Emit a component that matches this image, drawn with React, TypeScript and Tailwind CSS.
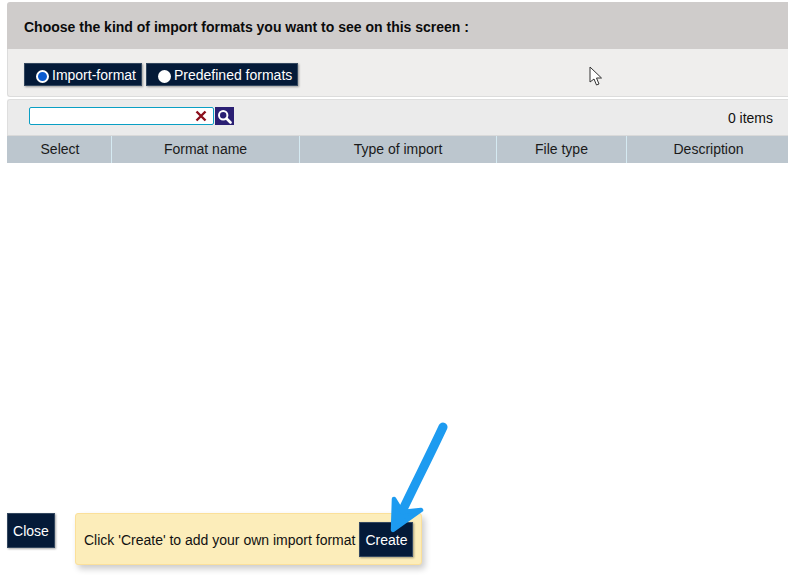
export default function App() {
  const btn = "bg-[#041a38] border border-[#33475f] text-white text-[14px] leading-none shadow-[1px_1px_2px_rgba(0,0,0,0.35)]";
  return (
    <div className="relative w-[788px] h-[579px] overflow-hidden bg-white pl-[7px] pt-[2px] flex flex-col font-['Liberation_Sans',Arial,sans-serif] text-[14px] text-[#111]">
      <div className="h-[47px] bg-[#cfcccb] rounded-tl-[3px] flex items-center pl-[17px] font-bold text-[14px] text-[#0b0b0b]">
        <span className="pt-[4px]">Choose the kind of import formats you want to see on this screen :</span>
      </div>
      <div className="h-[48px] bg-[#efeeed] border-b border-l border-[#dcdcdc] rounded-bl-[3px] flex items-start pl-[16px] pt-[14px] gap-[4px]">
        <div className={`${btn} w-[118px] h-[23px] flex items-center pl-[11px] gap-[3px]`}>
          <span className="w-[13px] h-[13px] mt-[3px] rounded-full bg-[#0a5bd0] border-[2px] border-white shrink-0" />
          <span>Import-format</span>
        </div>
        <div className={`${btn} w-[152px] h-[23px] flex items-center pl-[11px] gap-[3px]`}>
          <span className="w-[13px] h-[13px] mt-[3px] rounded-full bg-white shrink-0" />
          <span>Predefined formats</span>
        </div>
      </div>
      <div className="mt-[2px] h-[36px] bg-[#ebebeb] border-t border-l border-[#dedede] rounded-tl-[3px] flex items-start pt-[7px] pl-[21px] pr-[15px]">
        <div className="relative w-[185px] h-[18px] bg-white border border-[#0a9fc4] rounded-[2px]">
          <svg className="absolute right-[6px] top-[2px]" width="12" height="12" viewBox="0 0 12 12">
            <path d="M1.5 1.5 L10.5 10.5 M10.5 1.5 L1.5 10.5" stroke="#8b0f1c" strokeWidth="2.4" />
          </svg>
        </div>
        <div className="ml-[1px] w-[19px] h-[18px] bg-[#2a1f73] flex items-center justify-center">
          <svg width="15" height="15" viewBox="0 0 15 15" fill="none">
            <circle cx="6.2" cy="6.2" r="4.2" stroke="white" strokeWidth="2" />
            <path d="M9.5 9.5 L13.5 13.5" stroke="white" strokeWidth="2.6" strokeLinecap="round" />
          </svg>
        </div>
        <span className="ml-auto pt-[1px]">0 items</span>
      </div>
      <div className="h-[28px] bg-[#bcc6ce] border-t border-[#d9d9d9] flex items-center text-center text-[14px] text-[#1a1a1a]">
        <div className="w-[105px] h-full flex items-center justify-center pl-[2px] border-r border-[#d5eaf2]">Select</div>
        <div className="w-[188px] h-full flex items-center justify-center border-r border-[#d5eaf2]">Format name</div>
        <div className="w-[197px] h-full flex items-center justify-center border-r border-[#d5eaf2]">Type of import</div>
        <div className="w-[130px] h-full flex items-center justify-center border-r border-[#d5eaf2]">File type</div>
        <div className="w-[161px] h-full flex items-center justify-center pl-[2px]">Description</div>
      </div>
      <div className="flex-1" />
      <div className="flex items-start gap-[20px] mb-[14px]">
        <div className={`${btn} w-[48px] h-[35px] flex items-center justify-center`}>Close</div>
        <div className="w-[347px] h-[52px] bg-[#fcedba] border border-[#fbe09a] rounded-[3px] shadow-[3px_4px_6px_rgba(0,0,0,0.2)] flex items-center pl-[8px] gap-[4px]">
          <span className="whitespace-nowrap pt-[3px]">Click 'Create' to add your own import format</span>
          <div className={`${btn} w-[54px] h-[35px] flex items-center justify-center mt-[1px]`}>
            <span className="pt-[1px]">Create</span>
          </div>
        </div>
      </div>
      <svg className="absolute left-0 top-0 pointer-events-none" width="788" height="579" viewBox="0 0 788 579" fill="none">
        <path d="M443 427 C430 455 412 490 397 522" stroke="#1d9bf0" strokeWidth="9" strokeLinecap="round" />
        <path d="M394 499 L393 530 L421 510 L402 512 Z" fill="#1d9bf0" stroke="#1d9bf0" strokeWidth="4.5" strokeLinejoin="round" />
        <path d="M590 67 L590 82 L594 79 L596.5 85 L599 84 L596.5 78 L601.5 78 Z" fill="white" stroke="#333" strokeWidth="1" strokeLinejoin="round" />
      </svg>
    </div>
  );
}
